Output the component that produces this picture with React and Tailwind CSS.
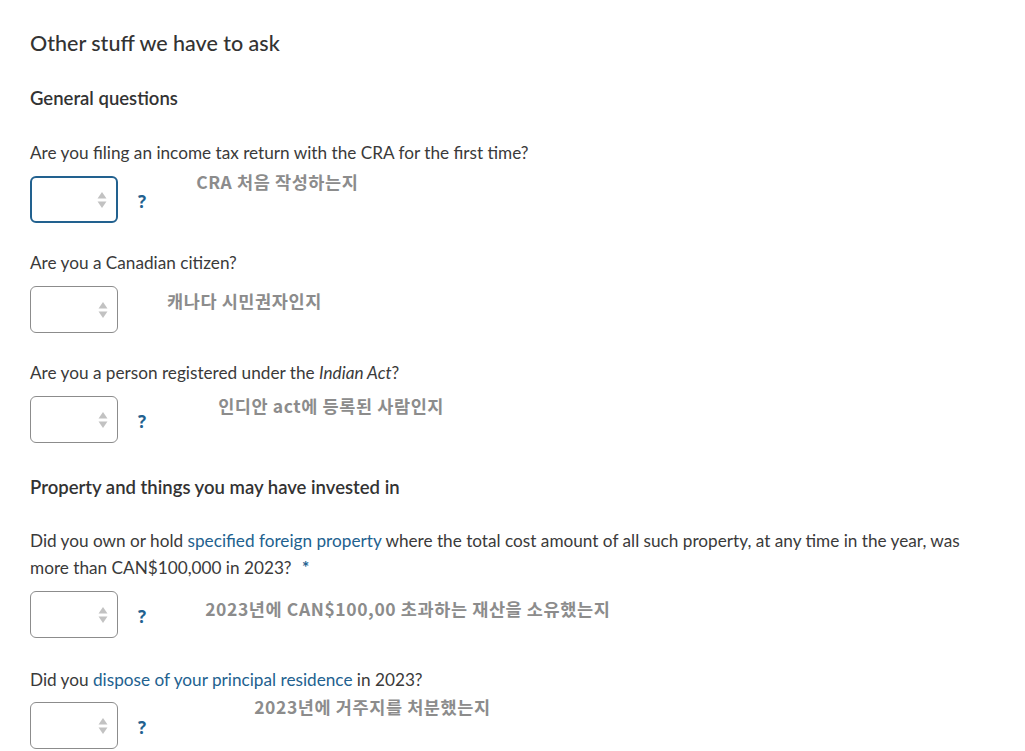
import React from "react";

const ko = { fontFamily: '"Noto Sans CJK KR", "Noto Sans", sans-serif' };
const koCls = "text-[17.5px] font-semibold text-[#8c8c8c] leading-[24px] tracking-[0.6px] whitespace-nowrap";

function Select({ focused }) {
  return (
    <div
      className={
        "relative w-[88px] h-[47px] rounded-[6px] bg-white shrink-0 " +
        (focused ? "border-2 border-[#22618f]" : "border border-[#8c8c8c]")
      }
    >
      <svg className="absolute right-[9px] top-1/2 -translate-y-1/2" width="10" height="18" viewBox="0 0 10 18">
        <path d="M5 1 L9.5 7.5 L0.5 7.5 Z" fill="#c2c2c2" />
        <path d="M5 17 L9.5 10.5 L0.5 10.5 Z" fill="#c2c2c2" />
      </svg>
    </div>
  );
}

function Help() {
  return (
    <span className="self-center ml-[20px] mt-[4px] text-[17px] font-bold text-[#22618f] leading-none" style={{ fontFamily: '"Open Sans", sans-serif' }}>
      ?
    </span>
  );
}

export default function App() {
  return (
    <div
      className="min-h-[751px] bg-white px-[30px] pt-[29px] text-[#3a3a3a] text-[17.2px]"
      style={{ fontFamily: 'Lato, "Noto Sans", sans-serif' }}
    >
      <h2 className="text-[21.5px] leading-[28px] font-medium text-[#333]">Other stuff we have to ask</h2>
      <h3 className="mt-[29px] text-[18.5px] leading-[24px] font-semibold text-[#333]">General questions</h3>

      {/* Q1 */}
      <p className="mt-[29px] leading-[27px]">Are you filing an income tax return with the CRA for the first time?</p>
      <div className="mt-[10px] flex items-start">
        <Select focused />
        <Help />
        <span className={"ml-[50px] mt-[-6px] " + koCls} style={ko}>
          CRA 처음 작성하는지
        </span>
      </div>

      {/* Q2 */}
      <p className="mt-[26px] leading-[27px]">Are you a Canadian citizen?</p>
      <div className="mt-[10px] flex items-start">
        <Select />
        <span className={"ml-[49px] mt-[3px] " + koCls} style={ko}>
          캐나다 시민권자인지
        </span>
      </div>

      {/* Q3 */}
      <p className="mt-[26px] leading-[27px]">
        Are you a person registered under the <i>Indian Act</i>?
      </p>
      <div className="mt-[10px] flex items-start">
        <Select />
        <Help />
        <span className={"ml-[72px] mt-[-2px] " + koCls} style={ko}>
          인디안 act에 등록된 사람인지
        </span>
      </div>

      <h3 className="mt-[32px] text-[18.5px] leading-[24px] font-semibold text-[#333]">Property and things you may have invested in</h3>

      {/* Q4 */}
      <p className="mt-[28px] leading-[27px] max-w-[960px]">
        Did you own or hold <span className="text-[#22618f]">specified foreign property</span> where the total cost amount of all such property, at any time in the year, was more than CAN$100,000 in 2023?{" "}
        <span className="ml-[6px] font-bold text-[#22618f]">*</span>
      </p>
      <div className="mt-[10px] flex items-start">
        <Select />
        <Help />
        <span className={"ml-[59px] mt-[6px] " + koCls} style={ko}>
          2023년에 CAN$100,00 초과하는 재산을 소유했는지
        </span>
      </div>

      {/* Q5 */}
      <p className="mt-[28px] leading-[27px]">
        Did you <span className="text-[#22618f]">dispose of your principal residence</span> in 2023?
      </p>
      <div className="mt-[9px] flex items-start">
        <Select />
        <Help />
        <span className={"ml-[108px] mt-[-7px] " + koCls} style={ko}>
          2023년에 거주지를 처분했는지
        </span>
      </div>
    </div>
  );
}
